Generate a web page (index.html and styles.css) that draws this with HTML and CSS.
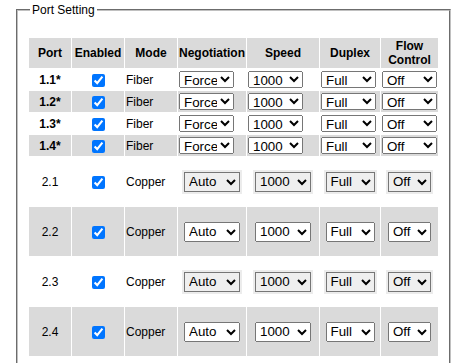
FILE: index.html
```html
<!DOCTYPE html>
<html lang="en">

<head>
  <meta charset="UTF-8">
  <meta name="viewport" content="width=device-width, initial-scale=1.0">
  <title>Port Setting</title>
  <link rel="stylesheet" href="styles.css">
</head>

<body>
  <fieldset class="box">
    <legend>Port Setting</legend>
    <table class="ports">
      <tr class="head">
        <th class="c-port">Port</th>
        <th class="c-en">Enabled</th>
        <th class="c-mode">Mode</th>
        <th class="c-neg">Negotiation</th>
        <th class="c-speed">Speed</th>
        <th class="c-dup">Duplex</th>
        <th class="c-flow">Flow<br>Control</th>
      </tr>

      <tr class="fiber">
        <td class="num">1.1*</td>
        <td class="mid"><input type="checkbox" checked></td>
        <td>Fiber</td>
        <td><select class="fix"><option>Force</option><option>Auto</option></select></td>
        <td><select class="fix"><option>1000</option><option>100</option></select></td>
        <td><select class="fix"><option>Full</option><option>Half</option></select></td>
        <td><select class="fix"><option>Off</option><option>On</option></select></td>
      </tr>
      <tr class="fiber gray">
        <td class="num">1.2*</td>
        <td class="mid"><input type="checkbox" checked></td>
        <td>Fiber</td>
        <td><select class="fix"><option>Force</option><option>Auto</option></select></td>
        <td><select class="fix"><option>1000</option><option>100</option></select></td>
        <td><select class="fix"><option>Full</option><option>Half</option></select></td>
        <td><select class="fix"><option>Off</option><option>On</option></select></td>
      </tr>
      <tr class="fiber">
        <td class="num">1.3*</td>
        <td class="mid"><input type="checkbox" checked></td>
        <td>Fiber</td>
        <td><select class="fix"><option>Force</option><option>Auto</option></select></td>
        <td><select class="fix"><option>1000</option><option>100</option></select></td>
        <td><select class="fix"><option>Full</option><option>Half</option></select></td>
        <td><select class="fix"><option>Off</option><option>On</option></select></td>
      </tr>
      <tr class="fiber gray">
        <td class="num">1.4*</td>
        <td class="mid"><input type="checkbox" checked></td>
        <td>Fiber</td>
        <td><select class="fix"><option>Force</option><option>Auto</option></select></td>
        <td><select class="fix"><option>1000</option><option>100</option></select></td>
        <td><select class="fix"><option>Full</option><option>Half</option></select></td>
        <td><select class="fix"><option>Off</option><option>On</option></select></td>
      </tr>

      <tr class="copper">
        <td class="mid">2.1</td>
        <td class="mid"><input type="checkbox" checked></td>
        <td>Copper</td>
        <td class="mid"><select class="auto w-neg"><option>Auto</option><option>Force</option></select></td>
        <td class="mid"><select class="auto w-speed"><option>1000</option><option>100</option><option>10</option></select></td>
        <td class="mid"><select class="auto w-dup"><option>Full</option><option>Half</option></select></td>
        <td class="mid"><select class="auto w-flow"><option>Off</option><option>On</option></select></td>
      </tr>
      <tr class="copper gray">
        <td class="mid">2.2</td>
        <td class="mid"><input type="checkbox" checked></td>
        <td>Copper</td>
        <td class="mid"><select class="auto w-neg"><option>Auto</option><option>Force</option></select></td>
        <td class="mid"><select class="auto w-speed"><option>1000</option><option>100</option><option>10</option></select></td>
        <td class="mid"><select class="auto w-dup"><option>Full</option><option>Half</option></select></td>
        <td class="mid"><select class="auto w-flow"><option>Off</option><option>On</option></select></td>
      </tr>
      <tr class="copper">
        <td class="mid">2.3</td>
        <td class="mid"><input type="checkbox" checked></td>
        <td>Copper</td>
        <td class="mid"><select class="auto w-neg"><option>Auto</option><option>Force</option></select></td>
        <td class="mid"><select class="auto w-speed"><option>1000</option><option>100</option><option>10</option></select></td>
        <td class="mid"><select class="auto w-dup"><option>Full</option><option>Half</option></select></td>
        <td class="mid"><select class="auto w-flow"><option>Off</option><option>On</option></select></td>
      </tr>
      <tr class="copper gray">
        <td class="mid">2.4</td>
        <td class="mid"><input type="checkbox" checked></td>
        <td>Copper</td>
        <td class="mid"><select class="auto w-neg"><option>Auto</option><option>Force</option></select></td>
        <td class="mid"><select class="auto w-speed"><option>1000</option><option>100</option><option>10</option></select></td>
        <td class="mid"><select class="auto w-dup"><option>Full</option><option>Half</option></select></td>
        <td class="mid"><select class="auto w-flow"><option>Off</option><option>On</option></select></td>
      </tr>
    </table>
  </fieldset>
</body>

</html>
```

FILE: styles.css
```css
* {
  margin: 0;
  padding: 0;
}

body {
  font-family: "Liberation Sans", Arial, sans-serif;
  font-size: 12px;
  color: #000;
  background: #fff;
}

.box {
  width: 411px;
  margin: 3px 0 0 16px;
  padding: 20px 10px 10px 10px;
  border: 2px groove #c0c0c0;
}

.box>legend {
  margin-left: 2px;
  padding: 0 2px;
  font-size: 12px;
  line-height: 14px;
}

.ports {
  width: 411px;
  table-layout: fixed;
  border-collapse: separate;
  border-spacing: 1px;
}

.ports th,
.ports td {
  box-sizing: border-box;
  padding: 1px;
  vertical-align: middle;
}

.ports th {
  height: 30px;
  background: #dadada;
  font-weight: bold;
  line-height: 14px;
  text-align: center;
}

.c-port { width: 42px; }
.c-en { width: 52px; }
.c-mode { width: 52px; }
.c-neg { width: 68px; }
.c-speed { width: 72px; }
.c-dup { width: 60px; }
.c-flow { width: 57px; }

.fiber>td {
  height: 21px;
}

.copper>td {
  height: 49px;
}

.gray>td {
  background: #dadada;
}

.num {
  font-weight: bold;
  text-align: center;
}

.mid {
  text-align: center;
}

.ports input[type="checkbox"] {
  width: 13px;
  height: 13px;
  margin: 0;
  vertical-align: middle;
}

.ports select {
  font-family: "Liberation Sans", Arial, sans-serif;
  font-size: 13.33px;
  vertical-align: middle;
  text-align: left;
}

.fix {
  width: 55px;
  height: 17px;
}

.auto {
  height: 20px;
  box-shadow: 0 0 0 2px #ececec;
}

.gray .auto {
  box-shadow: none;
}

.w-neg { width: 56px; }
.w-speed { width: 56px; }
.w-dup { width: 49px; }
.w-flow { width: 43px; }
```
